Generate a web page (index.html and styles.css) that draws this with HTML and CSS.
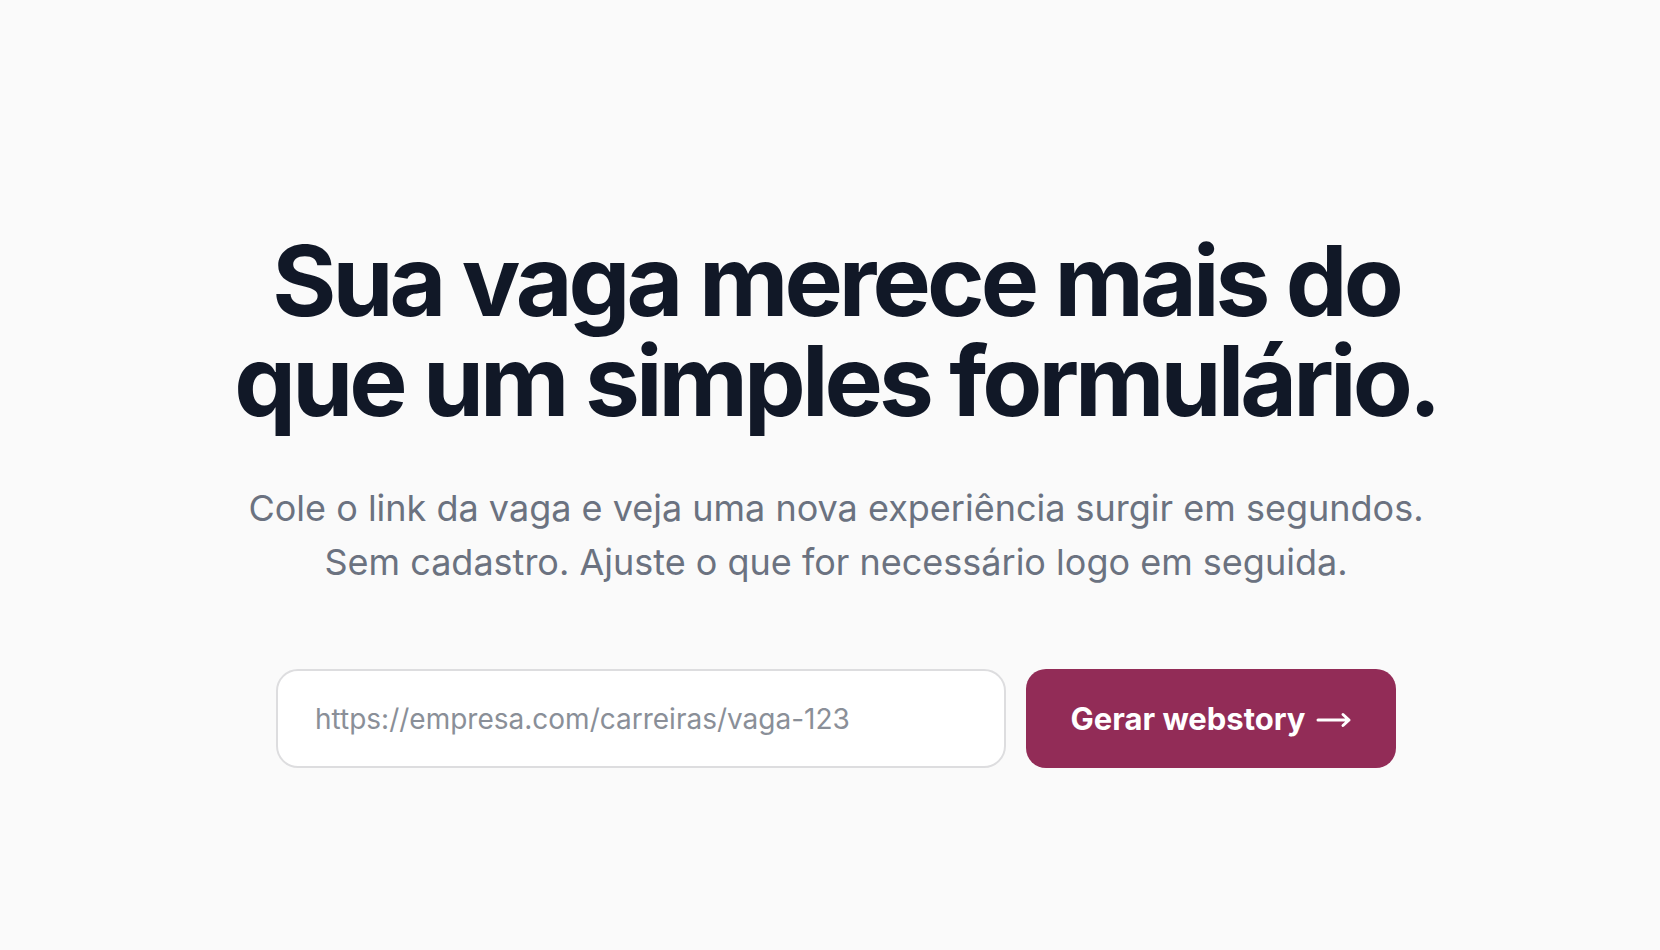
FILE: index.html
```html
<!DOCTYPE html>
<html lang="pt-BR">
<head>
    <meta charset="UTF-8">
    <meta name="viewport" content="width=device-width, initial-scale=1.0">
    <title>Webstory de vagas</title>
    <link rel="stylesheet" href="styles.css">
</head>
<body>

<main class="hero">
    <h1>Sua vaga merece mais do<br>que um simples formulário.</h1>
    <p class="lead">Cole o link da vaga e veja uma nova experiência surgir em segundos.<br>Sem cadastro. Ajuste o que for necessário logo em seguida.</p>

    <form class="url-form" onsubmit="return false">
        <input type="url" class="url-input" placeholder="https://empresa.com/carreiras/vaga-123">
        <button type="submit" class="btn-generate">
            Gerar webstory
            <svg class="arrow" width="36" height="16" viewBox="0 0 36 16" fill="none" stroke="currentColor" stroke-width="3" stroke-linecap="round" stroke-linejoin="round">
                <path d="M2 8h31M27 2.5l6 5.5-6 5.5"/>
            </svg>
        </button>
    </form>
</main>

</body>
</html>
```

FILE: styles.css
```css
body {
    margin: 0;
    background-color: #fafafa;
    font-family: Inter, "Noto Sans", sans-serif;
    color: #111827;
}
.hero {
    display: flex;
    flex-direction: column;
    align-items: center;
    text-align: center;
    padding: 231px 0 0 12px;
}
.hero h1 {
    margin: 0;
    font-size: 98px;
    line-height: 100px;
    font-weight: 700;
    letter-spacing: -0.04em;
    color: #111827;
}
.lead {
    margin: 50px 0 0;
    font-size: 36px;
    line-height: 54px;
    color: #6b7280;
}
.url-form {
    display: flex;
    gap: 20px;
    margin-top: 80px;
    width: 1120px;
}
.url-input {
    flex: 1;
    height: 99px;
    box-sizing: border-box;
    padding: 0 37px;
    border: 2px solid #dddddf;
    border-radius: 22px;
    background: #ffffff;
    font-family: inherit;
    font-size: 28px;
    color: #111827;
    outline: none;
}
.url-input::placeholder {
    color: #8a8f98;
}
.btn-generate {
    display: flex;
    align-items: center;
    justify-content: center;
    gap: 10px;
    width: 370px;
    height: 99px;
    border: none;
    border-radius: 20px;
    background-color: #922c57;
    color: #ffffff;
    font-family: inherit;
    font-size: 31px;
    font-weight: 700;
    cursor: pointer;
}
.arrow {
    margin-top: 3px;
}
```
